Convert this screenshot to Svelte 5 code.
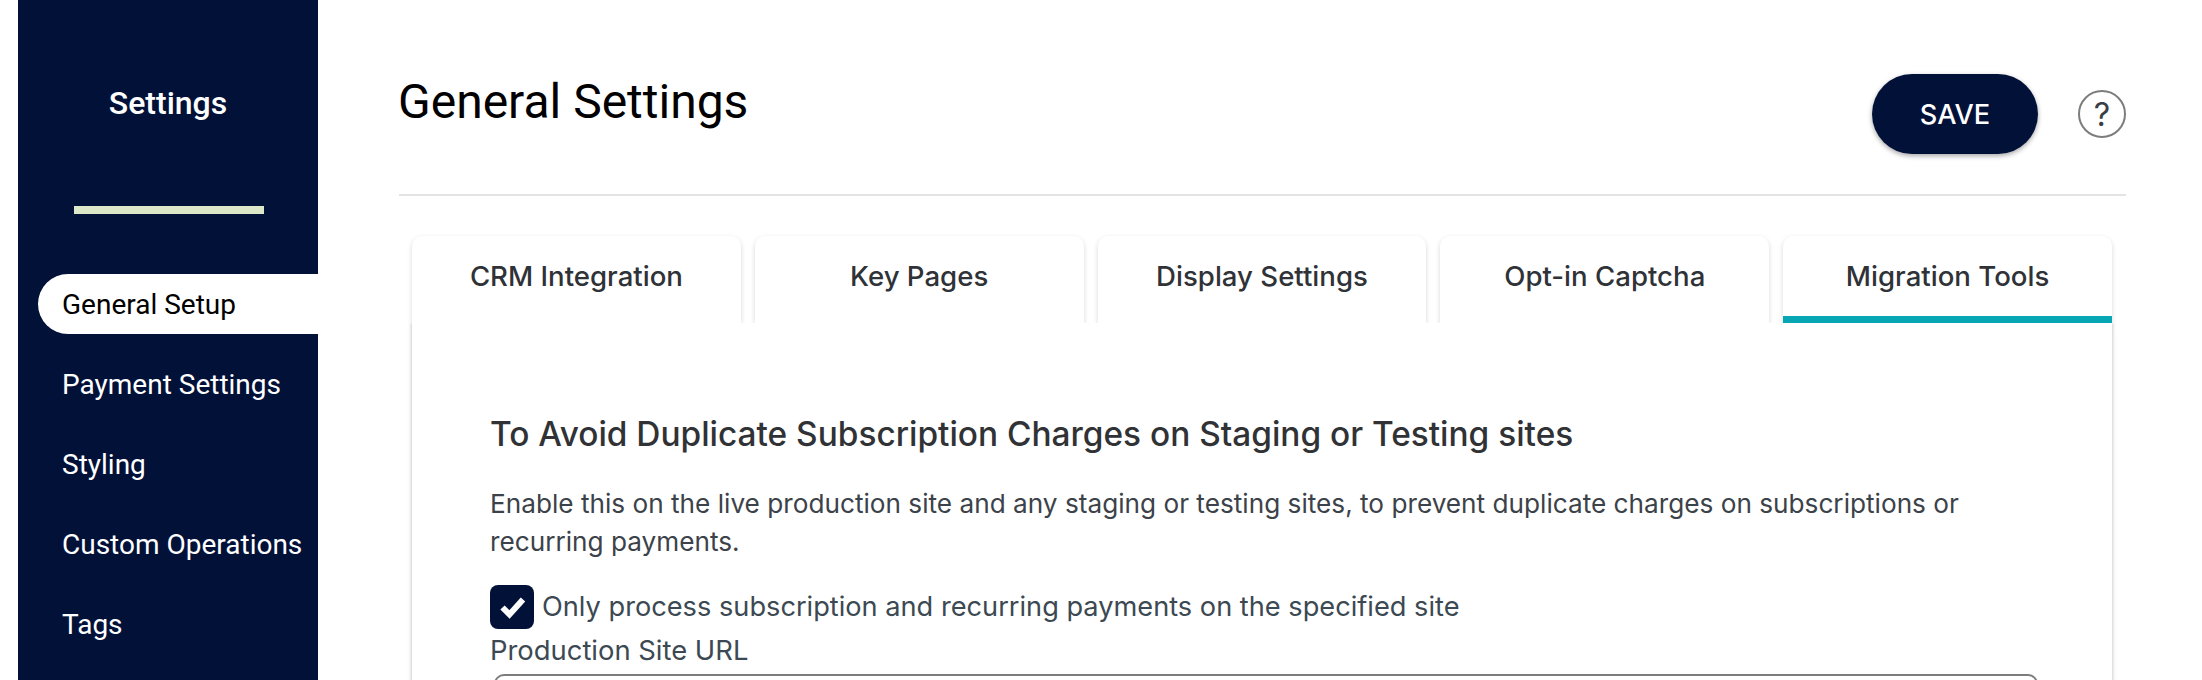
<script lang="ts">
    // Settings page: sidebar nav, header and the Migration Tools tab
    const navItems = ["General Setup", "Payment Settings", "Styling", "Custom Operations", "Tags"];
    const tabs = ["CRM Integration", "Key Pages", "Display Settings", "Opt-in Captcha", "Migration Tools"];

    let activeNav = $state("General Setup");
    let activeTab = $state("Migration Tools");
    let onlySpecified = $state(true);
</script>

<div class="page">
    <aside class="sidebar">
        <div class="brand">Settings</div>
        <div class="bar"></div>
        <nav class="nav">
            {#each navItems as item}
                <button type="button" class="nav-item" class:active={activeNav === item} onclick={() => (activeNav = item)}>
                    {item}
                </button>
            {/each}
        </nav>
    </aside>

    <main class="main">
        <header class="header">
            <h1>General Settings</h1>
            <div class="actions">
                <button type="button" class="save">SAVE</button>
                <button type="button" class="help" aria-label="Help">?</button>
            </div>
        </header>

        <div class="content">
            <div class="tabs">
                {#each tabs as tab}
                    <button type="button" class="tab" class:active={activeTab === tab} onclick={() => (activeTab = tab)}>
                        {tab}
                    </button>
                {/each}
            </div>

            <section class="panel">
                <h2>To Avoid Duplicate Subscription Charges on Staging or Testing sites</h2>
                <p>Enable this on the live production site and any staging or testing sites, to prevent duplicate charges on subscriptions or recurring payments.</p>
                <label class="check">
                    <input type="checkbox" bind:checked={onlySpecified} />
                    <span class="box">
                        <svg viewBox="0 0 44 44" width="44" height="44" aria-hidden="true">
                            <path d="M12.5 22.5l7 7 13.5-15" fill="none" stroke="#fff" stroke-width="6" />
                        </svg>
                    </span>
                    <span>Only process subscription and recurring payments on the specified site</span>
                </label>
                <label class="field-label" for="site-url">Production Site URL</label>
                <input id="site-url" class="url" type="text" />
            </section>
        </div>
    </main>
</div>

<style>
    :global(body) {
        margin: 0;
        background: #fff;
    }

    .page {
        display: flex;
        height: 680px;
        overflow: hidden;
        padding-left: 18px;
        box-sizing: border-box;
    }

    .sidebar {
        width: 300px;
        flex: none;
        background: #021138;
        display: flex;
        flex-direction: column;
        align-items: flex-end;
        box-sizing: border-box;
    }

    .brand {
        align-self: stretch;
        text-align: center;
        margin-top: 85px;
        font: 500 32px/36px Roboto, sans-serif;
        color: #fff;
    }

    .bar {
        align-self: flex-start;
        margin: 85px 0 60px 56px;
        width: 190px;
        height: 8px;
        background: #dde8c9;
    }

    .nav {
        display: flex;
        flex-direction: column;
        gap: 20px;
        width: 280px;
    }

    .nav-item {
        height: 60px;
        padding: 0 0 0 24px;
        border: none;
        background: transparent;
        color: #fff;
        font: 400 28px Roboto, sans-serif;
        text-align: left;
        white-space: nowrap;
        border-radius: 30px 0 0 30px;
        cursor: pointer;
    }

    .nav-item.active {
        background: #fff;
        color: #000;
    }

    .main {
        flex: none;
        width: 1727px;
        margin-left: 81px;
    }

    .header {
        display: flex;
        justify-content: space-between;
        height: 196px;
        box-sizing: border-box;
        border-bottom: 2px solid #e3e3e3;
    }

    h1 {
        margin: 74px 0 0 -1px;
        font: 400 48px/56px Roboto, sans-serif;
        color: #000;
    }

    .actions {
        display: flex;
        align-items: center;
        gap: 40px;
        height: 80px;
        margin-top: 74px;
    }

    .save {
        width: 166px;
        height: 80px;
        border: none;
        border-radius: 40px;
        background: #021138;
        color: #fff;
        font: 500 27.2px Inter, sans-serif;
        box-shadow: 0 2px 5px rgba(0, 0, 0, 0.35);
        cursor: pointer;
    }

    .help {
        width: 48px;
        height: 48px;
        padding: 0;
        border: 2px solid #7d7d7d;
        border-radius: 50%;
        background: #fff;
        color: #3a3f47;
        font: 400 32px Inter, sans-serif;
        cursor: pointer;
    }

    .content {
        margin: 40px 14px 0 13px;
    }

    .tabs {
        display: flex;
        gap: 14px;
        position: relative;
    }

    .tab {
        flex: 1;
        height: 87px;
        padding: 0 0 8px;
        border: none;
        border-radius: 10px 10px 0 0;
        background: #fff;
        color: #2f3237;
        font: 500 27.6px Inter, sans-serif;
        box-shadow: 0 2px 5px rgba(0, 0, 0, 0.16);
        cursor: pointer;
    }

    .tab.active {
        border-bottom: 7px solid #06a6b5;
        padding-bottom: 1px;
    }

    .panel {
        position: relative;
        height: 400px;
        box-sizing: border-box;
        padding: 90px 78px 0;
        background: #fff;
        box-shadow: 0 1px 4px rgba(0, 0, 0, 0.3);
        clip-path: inset(0 -10px 0 -10px);
    }

    h2 {
        margin: 0 0 30px;
        font: 500 33.4px/42px Inter, sans-serif;
        color: #303236;
    }

    p {
        margin: 0 0 24px;
        font: 400 26.2px/38px Inter, sans-serif;
        color: #3c4249;
    }

    .check {
        display: flex;
        align-items: center;
        gap: 8px;
        font: 400 27.2px/44px Inter, sans-serif;
        color: #3c4952;
        cursor: pointer;
    }

    .check input {
        position: absolute;
        opacity: 0;
        width: 0;
        height: 0;
    }

    .box {
        width: 44px;
        height: 44px;
        flex: none;
        display: flex;
        border-radius: 8px;
        background: #021138;
    }

    .field-label {
        display: block;
        margin-top: 3px;
        font: 400 27.4px/36px Inter, sans-serif;
        color: #3c4952;
    }

    .url {
        display: block;
        box-sizing: border-box;
        width: 1544px;
        height: 60px;
        margin: 6px 0 0 4px;
        border: 2px solid #7d7d7d;
        border-radius: 10px;
        outline: none;
    }
</style>
